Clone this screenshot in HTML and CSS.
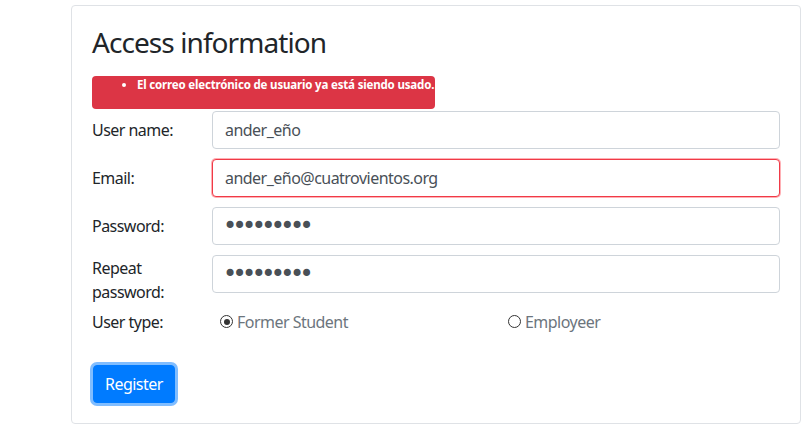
FILE: index.html
```html
<!DOCTYPE html>
<html lang="en">
<head>
<meta charset="utf-8">
<title>Access information</title>
<link rel="stylesheet" href="styles.css">
</head>
<body>
<div class="page">
  <form class="card">
    <h3 class="title">Access information</h3>
    <div class="alert">
      <ul>
        <li>El correo electrónico de usuario ya está siendo usado.</li>
      </ul>
    </div>
    <div class="row">
      <label class="col-label" for="user">User name:</label>
      <input class="control" id="user" type="text" value="ander_eño">
    </div>
    <div class="row">
      <label class="col-label" for="email">Email:</label>
      <input class="control invalid" id="email" type="text" value="ander_eño@cuatrovientos.org">
    </div>
    <div class="row">
      <label class="col-label" for="pass">Password:</label>
      <input class="control" id="pass" type="password" value="123456789">
    </div>
    <div class="row row-tall">
      <label class="col-label col-label-wrap" for="pass2">Repeat password:</label>
      <input class="control" id="pass2" type="password" value="123456789">
    </div>
    <div class="row row-radio">
      <span class="col-label col-label-plain">User type:</span>
      <div class="radios">
        <label class="radio first"><span class="dot checked"></span>Former Student</label>
        <label class="radio"><span class="dot"></span>Employeer</label>
      </div>
    </div>
    <button type="button" class="btn">Register</button>
  </form>
</div>
</body>
</html>
```
FILE: styles.css
```css
* { box-sizing: border-box; }
html, body { margin: 0; padding: 0; background: #fff; }
body {
  font-family: "Noto Sans", "Open Sans", sans-serif;
  font-size: 16px;
  letter-spacing: -0.033em;
  color: #212529;
}
.page {
  padding: 5px 0 0 71px;
}
.card {
  width: 730px;
  border: 1px solid #dfe2e6;
  border-radius: 4px;
  padding: 20px;
}
.title {
  margin: 0 0 16px;
  font-size: 28px;
  font-weight: 400;
  line-height: 1.2;
  letter-spacing: -0.033em;
  color: #212529;
}
.alert {
  width: 343px;
  height: 33px;
  margin-bottom: 2px;
  background: #dc3545;
  border-radius: 4px;
  color: #fff;
  font-size: 11.5px;
  font-weight: 700;
  line-height: 16px;
  letter-spacing: -0.015em;
  white-space: nowrap;
}
.alert ul {
  margin: 0;
  padding: 1px 0 0 45px;
}
.row {
  display: flex;
  align-items: flex-start;
  margin-bottom: 10px;
}
.col-label {
  width: 120px;
  flex: none;
  padding: 7px 15px 7px 0;
  line-height: 24px;
}
.col-label-wrap {
  padding-top: 1px;
  padding-bottom: 0;
}
.row-tall { margin-bottom: 6px; }
.control {
  flex: 1;
  height: 38px;
  padding: 6px 12px;
  border: 1px solid #ced4da;
  border-radius: 4px;
  font-family: inherit;
  font-size: 16px;
  letter-spacing: -0.033em;
  line-height: 24px;
  color: #495057;
  background: #fff;
}
.control[type="password"] {
  padding-left: 10px;
  font-family: "DejaVu Sans", sans-serif;
  font-size: 24px;
  letter-spacing: -4.6px;
  color: #495057;
}
.control.invalid {
  border-color: #f03a47;
  box-shadow: 0 0 0 1px rgba(255, 80, 90, 0.45);
}
.row-radio {
  align-items: center;
  margin-bottom: 31px;
}
.col-label-plain { padding: 0; }
.radios {
  flex: 1;
  display: grid;
  grid-template-columns: 296px 1fr;
}
.radio {
  display: flex;
  align-items: center;
  line-height: 24px;
  color: #6c757d;
}
.radio.first { padding-left: 8px; }
.dot {
  width: 13px;
  height: 13px;
  margin-right: 4px;
  border: 1.5px solid #333;
  border-radius: 50%;
  display: inline-flex;
  align-items: center;
  justify-content: center;
}
.dot.checked::after {
  content: "";
  width: 6px;
  height: 6px;
  border-radius: 50%;
  background: #333;
}
.btn {
  display: block;
  margin-left: 1px;
  height: 38px;
  padding: 0 11px;
  border: 1px solid #007bff;
  border-radius: 4px;
  background: #007bff;
  color: #fff;
  font-family: inherit;
  font-size: 16px;
  letter-spacing: -0.033em;
  line-height: 24px;
  box-shadow: 0 0 0 3px #80bdff;
}
```
